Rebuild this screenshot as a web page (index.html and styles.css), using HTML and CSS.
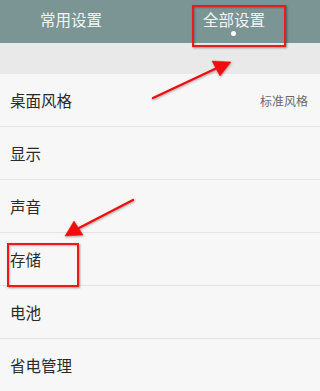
FILE: index.html
```html
<!DOCTYPE html>
<html lang="zh">
<head>
<meta charset="utf-8">
<link rel="stylesheet" href="styles.css">
</head>
<body>
<div class="screen">
  <header class="tabs">
    <div class="tab">常用设置</div>
    <div class="tab active">全部设置<span class="dot"></span></div>
  </header>
  <div class="band"></div>
  <ul class="list">
    <li class="row"><span>桌面风格</span><span class="value">标准风格</span></li>
    <li class="row"><span>显示</span></li>
    <li class="row"><span>声音</span></li>
    <li class="row"><span>存储</span></li>
    <li class="row"><span>电池</span></li>
    <li class="row"><span>省电管理</span></li>
  </ul>
  <div class="mark mark-top"></div>
  <div class="mark mark-store"></div>
  <svg class="arrows" width="320" height="391" viewBox="0 0 320 391">
    <defs>
      <filter id="sh" x="-20%" y="-20%" width="140%" height="140%">
        <feDropShadow dx="0.5" dy="1" stdDeviation="0.8" flood-color="#000" flood-opacity="0.35"/>
      </filter>
    </defs>
    <g filter="url(#sh)" fill="#f01010" stroke="#f01010">
      <line x1="153" y1="98" x2="217" y2="68" stroke-width="2.4" stroke-linecap="round"/>
      <polygon points="231,62 212,61 220,76" stroke-width="0.5"/>
      <line x1="133" y1="200" x2="79" y2="228" stroke-width="2.4" stroke-linecap="round"/>
      <polygon points="65,236 74,221 83,235" stroke-width="0.5"/>
    </g>
  </svg>
</div>
</body>
</html>
```
FILE: styles.css
```css
* { box-sizing: border-box; }
html, body { margin: 0; padding: 0; }
body {
  font-family: "Noto Sans CJK SC", "Noto Sans", sans-serif;
  background: #f7f7f7;
}
.screen {
  position: relative;
  width: 320px;
  height: 391px;
  overflow: hidden;
}
.tabs {
  height: 43px;
  background: #7b9594;
  display: flex;
  align-items: flex-start;
  color: #f4f6f6;
  font-size: 15.5px;
  line-height: 20px;
}
.tab {
  padding-top: 9px;
  display: flex;
  flex-direction: column;
  align-items: center;
}
.tab:first-child { margin-left: 40px; }
.tab.active { margin-left: auto; margin-right: 55px; }
.dot {
  width: 5px;
  height: 5px;
  border-radius: 50%;
  background: #ffffff;
  margin-top: 2px;
}
.band {
  height: 31px;
  background: #e9e9e9;
}
.list {
  list-style: none;
  margin: 0;
  padding: 0;
}
.row {
  height: 53px;
  border-bottom: 1px solid #e4e4e4;
  display: flex;
  align-items: center;
  justify-content: space-between;
  padding: 0 12px 0 10px;
  font-size: 15.5px;
  color: #2a2a2a;
  background: #f7f7f7;
}
.value {
  font-size: 12px;
  color: #6a6a6a;
}
.mark {
  position: absolute;
  border: 2px solid #f01818;
  box-shadow: 1px 1px 2px rgba(0,0,0,0.4), inset 1px 1px 2px rgba(0,0,0,0.25);
}
.mark-top { left: 192px; top: 5px; width: 94px; height: 42px; }
.mark-store { left: 7px; top: 243px; width: 72px; height: 44px; }
.arrows {
  position: absolute;
  left: 0;
  top: 0;
}
```
